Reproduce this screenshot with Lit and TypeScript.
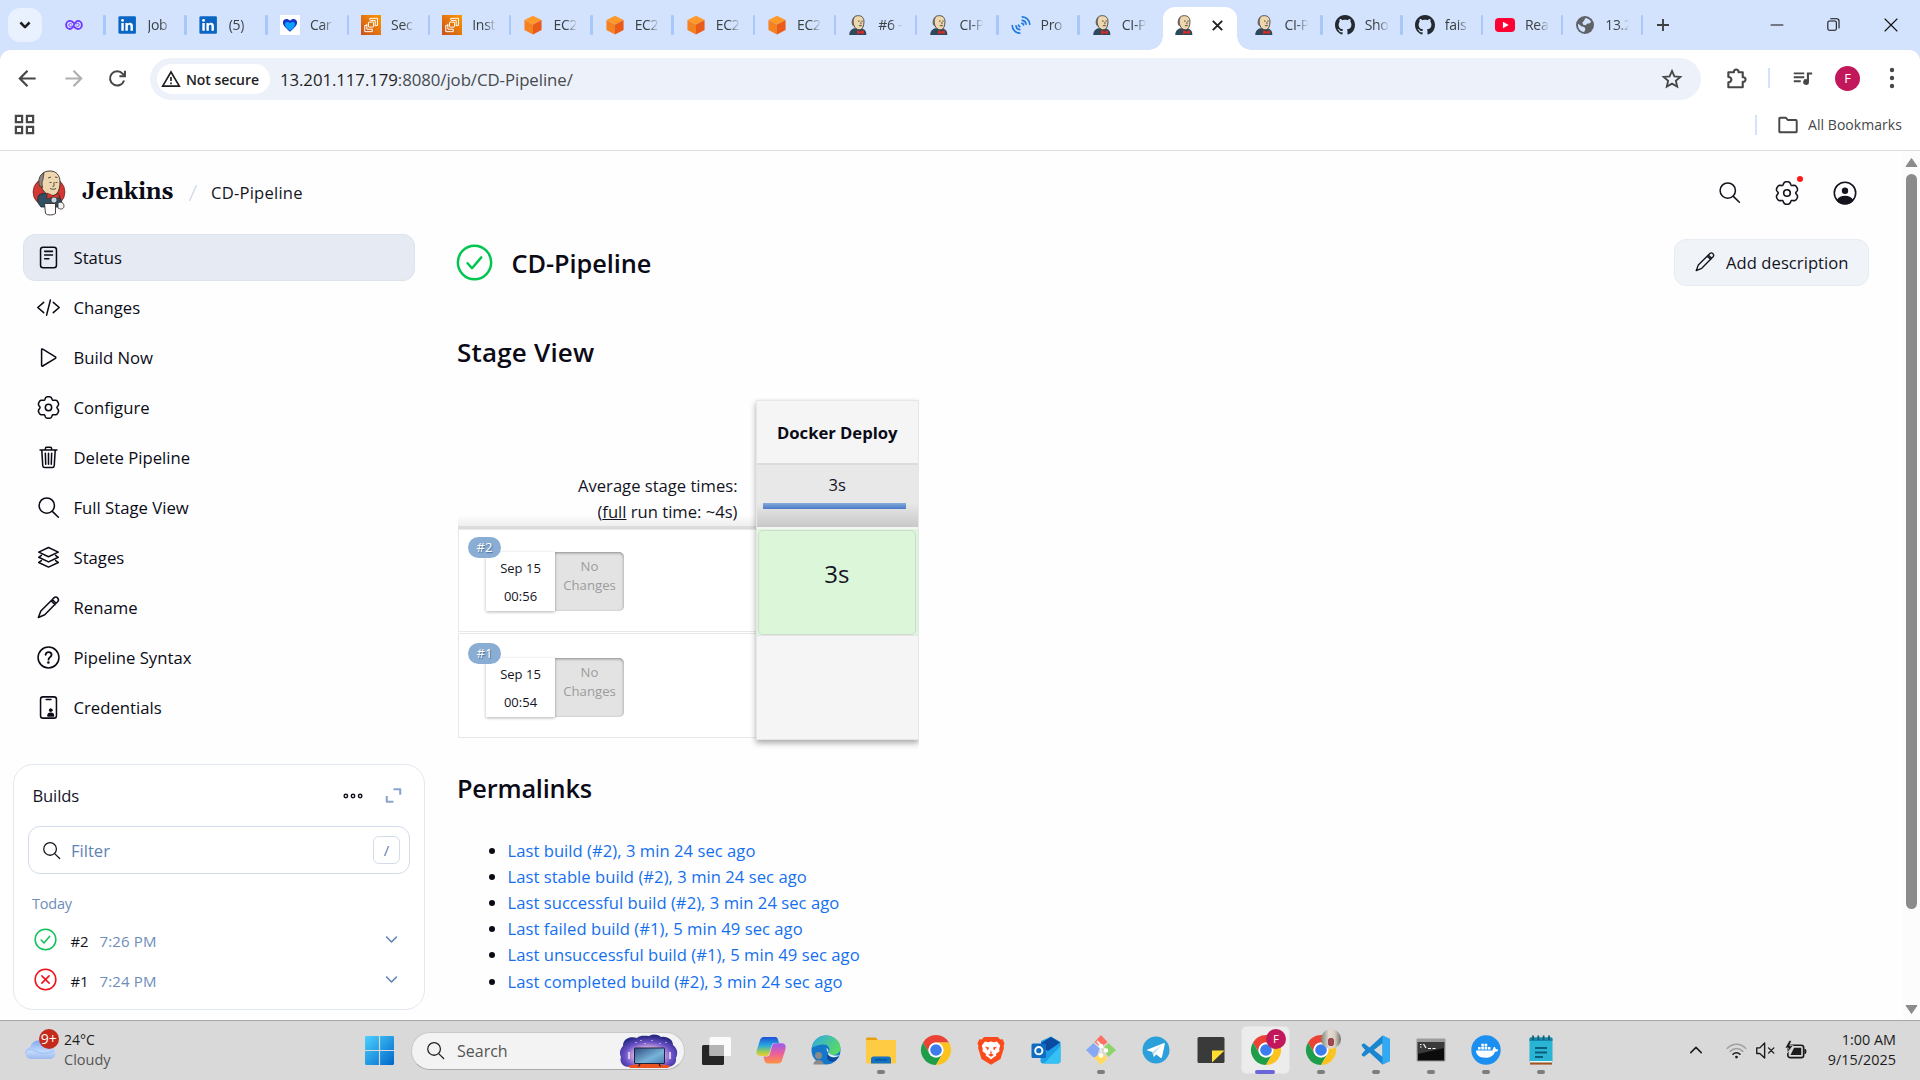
import { LitElement, html, css, svg, nothing } from "lit";
import { customElement, property } from "lit/decorators.js";
import { classMap } from "lit/directives/class-map.js";

const chromeMark = svg`
  <path d="M24 12H44.8A24 24 0 0 0 3.2 12L13.6 30A12 12 0 0 1 24 12Z" fill="#ea4335"/>
  <path d="M34.4 30L24 48A24 24 0 0 1 3.2 12L13.6 30A12 12 0 0 0 34.4 30Z" fill="#1e9e4a"/>
  <path d="M24 12H44.8A24 24 0 0 1 24 48L34.4 30A12 12 0 0 0 24 12Z" fill="#fcc31e"/>
  <circle cx="24" cy="24" r="12" fill="#fff"/><circle cx="24" cy="24" r="9.3" fill="#3b7ded"/>`;

/** Six-lobed cog outline, centred on 12,12: flat lobe tips joined by narrow rounded notches. */
const cog = (() => {
  const pts: string[] = [];
  for (let a = 0; a < 360; a += 3) {
    const t = (a * Math.PI) / 180;
    const c = 0.5 + 0.5 * Math.cos(6 * t);
    const r = 8.8 + 2.5 * (1 - Math.pow(1 - c, 2.2));
    pts.push(`${(12 + r * Math.sin(t)).toFixed(2)} ${(12 - r * Math.cos(t)).toFixed(2)}`);
  }
  return `M${pts.join("L")}Z`;
})();

type Glyph = { box: string; art: unknown };

const line = (art: unknown, box = "0 0 24 24"): Glyph => ({
  box,
  art: svg`<g fill="none" stroke="currentColor" stroke-width="1.6" stroke-linecap="round" stroke-linejoin="round">${art}</g>`,
});
const fill = (art: unknown, box = "0 0 24 24"): Glyph => ({ box, art });

const G: Record<string, Glyph> = {
  // sidebar
  status: line(svg`<rect x="3.7" y="1.2" width="16.6" height="21.6" rx="2.6"/><path d="M8 5.6h8.2M8 9.4h8.2M8 13.2h4.4"/>`),
  changes: line(svg`<path d="M7 6.600.8 12 7 17.400M17 6.600 23.200 12 17 17.400M14 4.200 10 20"/>`),
  play: line(svg`<path d="M4.800 3.900v16.300c0 .7.600 1.100 1.200.7l13.200-8c.6-.4.6-1.200 0-1.600L6 3.200c-.6-.4-1.200 0-1.200.7z"/>`),
  gear: line(svg`<path d=${cog}/><circle cx="12" cy="12" r="3.300"/>`),
  trash: line(svg`<path d="M5 4.200L6 20.600C6.100 21.700 6.900 22.500 8 22.500H16C17.100 22.500 17.900 21.700 18 20.600L19 4.200M3.200 4.200H20.800M8.800 4V2.300C8.800 1.700 9.200 1.200 9.900 1.200H14.100C14.800 1.200 15.200 1.700 15.200 2.300V4M12 7.600V19M8.700 7.600L9.100 19M15.300 7.600L14.900 19"/>`),
  search: line(svg`<circle cx="10.200" cy="10" r="8"/><path d="M16 16l6.300 6.200"/>`),
  layers: line(svg`<path d="M12 1.600 22.200 6.400 12 11.200 1.800 6.400zM4.600 9.800 1.800 11.800 12 16.600l10.200-4.800-2.800-2M4.600 15.200 1.800 17.200 12 22l10.200-4.800-2.800-2"/>`),
  pencil: line(svg`<path d="M16 3.600l1.600-1.600c1.200-1.200 3-.9 3.900 0 .9 1 1.200 2.800 0 4l-1.600 1.500zM16 3.600 4 15.600 1.400 22.400 8.100 19.600 19.900 7.500M15 5.200l3.800 3.800"/>`),
  help: line(svg`<circle cx="12" cy="12" r="10.900"/><path d="M9 9.200c.1-1.900 1.500-2.900 3.200-2.900 1.800 0 3 1.200 3 2.700 0 2.700-3.200 2.500-3.200 5.300" stroke-width="1.900"/><circle cx="11.900" cy="17.200" r=".6" fill="currentColor"/>`),
  cred: line(svg`<rect x="3.700" y=".9" width="16.600" height="22.200" rx="2.600"/><path d="M9.600 3.600h5"/><circle cx="14.300" cy="14.800" r="1.500" fill="currentColor" stroke-width="1"/><path d="M11.400 20.800c0-3.700 5.800-3.700 5.800 0z" fill="currentColor"/>`),
  user: line(svg`<circle cx="12" cy="12" r="10.700"/><circle cx="12" cy="9.800" r="3.200" fill="currentColor" stroke="none"/><path d="M4.600 19.200c3-5 11.800-5 14.800 0-3.500 4.600-11.300 4.600-14.800 0z" fill="currentColor"/>`),
  ok: line(svg`<circle cx="12" cy="12" r="10.800"/><path d="M7.500 12.500l2.900 3.200 6-7"/>`),
  fail: line(svg`<circle cx="12" cy="12" r="10.800"/><path d="M8.200 8.200l7.600 7.600M15.800 8.200l-7.600 7.600"/>`),
  more: line(svg`<circle cx="4.200" cy="12" r="1.900"/><circle cx="12" cy="12" r="1.900"/><circle cx="19.800" cy="12" r="1.900"/>`),
  expand: line(svg`<path d="M12 4h8.500v7M3.500 12.500V20H12" stroke-width="2.600" stroke-linecap="butt"/>`),
  chev: line(svg`<path d="M5 8.500l7 7 7-7" stroke-width="2.200"/>`),
  chevUp: line(svg`<path d="M5 15.500l7-7 7 7" stroke-width="2"/>`),
  // browser
  tabdown: line(svg`<path d="M6.500 9l5.500 5.600L17.500 9" stroke-width="3" stroke-linecap="butt"/>`),
  plus: line(svg`<path d="M12 3v18M3 12h18" stroke-width="2.800" stroke-linecap="butt"/>`),
  close: line(svg`<path d="M4.500 4.500l15 15M19.500 4.500l-15 15" stroke-width="3" stroke-linecap="butt"/>`),
  winmin: line(svg`<path d="M4 12h16" stroke-width="1.400"/>`),
  winmax: line(svg`<rect x="4" y="7" width="12" height="13" rx="2" stroke-width="1.500"/><path d="M8 4h8.500c2 0 3.300 1.300 3.300 3.300V17" stroke-width="1.500"/>`),
  winclose: line(svg`<path d="M4 4l16 16M20 4l-16 16" stroke-width="1.500"/>`),
  back: line(svg`<path d="M20.500 12H4M12 4l-8 8 8 8" stroke-width="2.300" stroke-linecap="butt" stroke-linejoin="miter"/>`),
  fwd: line(svg`<path d="M3.500 12H20M12 4l8 8-8 8" stroke-width="2.300" stroke-linecap="butt" stroke-linejoin="miter"/>`),
  reload: line(svg`<path d="M19.500 14.200A8.200 8.200 0 1 1 18 6.600l2 2.400M20.500 3v6.300h-6.300" stroke-width="2.300" stroke-linecap="butt" stroke-linejoin="miter"/>`),
  warn: line(svg`<path d="M12 3.600 22 20.500H2z" stroke-width="2" stroke-linejoin="miter"/><path d="M12 9.500v5M12 16.200v2" stroke-width="2" stroke-linecap="butt"/>`),
  star: line(svg`<path d="M12 3.200l2.600 5.900 6.500.6-4.900 4.300 1.500 6.300L12 17l-5.700 3.300 1.500-6.300-4.900-4.300 6.500-.6z" stroke-width="2" stroke-linejoin="miter"/>`),
  puzzle: line(svg`<path d="M3.500 5.500h5.800c-.6-3.800 5.400-3.800 4.800 0h4.400v5.200c3.900-.5 3.900 5.300 0 4.800v5.700h-15v-5.300c4.200.2 4.200-5.700 0-5.500z" stroke-width="2.200"/>`),
  music: fill(svg`<path d="M2 5h12v2.200H2zM2 9.500h12v2.200H2zM2 14h8v2.200H2zM17 5h6v2.300h-3.600V16a3.300 3.300 0 1 1-2.400-3.200z" fill="currentColor"/>`),
  dots: fill(svg`<circle cx="12" cy="4" r="2.200" fill="currentColor"/><circle cx="12" cy="12" r="2.200" fill="currentColor"/><circle cx="12" cy="20" r="2.200" fill="currentColor"/>`),
  apps: line(svg`<path d="M3 3h6.500v6.500H3zM14.500 3H21v6.500h-6.500zM3 14.500h6.500V21H3zM14.500 14.500H21V21h-6.500z" stroke-width="2.300" stroke-linejoin="miter"/>`),
  folderLine: line(svg`<path d="M2.500 19V5c0-.6.400-1 1-1h6l2.500 2.600h8.500c.6 0 1 .4 1 1V19c0 .6-.4 1-1 1h-17c-.6 0-1-.4-1-1z" stroke-width="2.100"/>`),
  // favicons
  loop: line(svg`<path d="M12 9.600C10.300 7.500 8.800 6.500 6.900 6.500a5.300 5.300 0 0 0 0 10.800c4.700 0 5.500-10.800 10.200-10.800a5.300 5.300 0 0 1 0 10.800c-1.900 0-3.400-1-5.100-3.100" stroke="#7038ff" stroke-width="2.500"/><path d="M9 13.500a2.200 2.200 0 1 1-.2-3M15 10.400a2.200 2.200 0 1 1 .2 3" stroke="#7038ff" stroke-width="1.200"/>`),
  linkedin: fill(svg`<rect x=".5" y="1.500" width="21" height="21" rx="1.500" fill="#0a66c2"/><path d="M4 9.500h2.900v9.300H4zM8.900 9.500h2.800v1.300c1.500-2.500 6.200-2.200 6.200 2.500v5.500H15v-5c0-3-3.200-2.700-3.200 0v5H8.900z" fill="#fff"/><circle cx="5.450" cy="6.500" r="1.700" fill="#fff"/>`),
  heart: fill(svg`<rect width="24" height="24" fill="#fff"/><path d="M12 20C6 15 3.500 12 3.500 9c0-5 6-5.500 8.500-2 2.500-3.500 8.500-3 8.500 2 0 3-2.500 6-8.500 11z" fill="#1a35c8"/><path d="M12 19c-4-3.500-6-5.500-6-8 0-3 4-3.500 6-1 2-2.500 6-2 6 1 0 2.500-2 4.500-6 8z" fill="#0aa0ff"/>`),
  aws: fill(svg`<defs><linearGradient id="aw" x1="0" y1="1" x2="1" y2="0"><stop offset="0" stop-color="#c8511b"/><stop offset="1" stop-color="#f90"/></linearGradient></defs><rect width="24" height="24" fill="url(#aw)"/><g fill="none" stroke="#fff" stroke-width="1.200"><rect x="9" y="8.500" width="6" height="6" rx=".5"/><path d="M7.500 12.500H4.500v7.500h9v-3M10.500 6V4h9.300v8.500h-2.500M7 10.500V17h6.500M11 6.500h6v7"/></g>`),
  ec2: fill(svg`<path d="M12 .8 22.300 6 12 11.500 1.700 6z" fill="#ff9a2a"/><path d="M1.700 6 12 11.500V23.500L1.700 18z" fill="#f58220"/><path d="M22.300 6 12 11.500v12L22.300 18z" fill="#ea5b1b"/>`),
  jenkins: fill(svg`<path d="M1.500 24c0-5 3-7 6-8h8c4 1 6.500 2.500 6.500 8z" fill="#2c4a5c"/><path d="M6 8C5.500 2.500 8.500.8 12.500.8c4.500 0 7 3 6.600 8-.2 3-.6 6-3 8.200-2 1.300-4 1-6.100-.5C7.500 14.500 6.500 11.500 6 8z" fill="#eed7ae" stroke="#3a3330" stroke-width="1"/><path d="M8.500 2.500C4.500 4 3.700 8 5 12l2.500 2c-.8-3-1.500-5-.7-7.500C7.300 4.800 7.800 3.700 8.500 2.500z" fill="#6b6560"/><path d="M12 7.300h2M16 7.300h1.800M13 12.800h3.500M15.500 8.500v2.600" stroke="#3a3330" stroke-width="1" fill="none"/><path d="M11 18l4 2 4-2v5l-4-1.500-4 1.500z" fill="#e02a24"/>`),
  waves: line(svg`<g stroke="#1f7ae0" stroke-width="2"><path d="M13.500 6.500a5 5 0 0 1 4.500 4.500M13.500 2.200a9.300 9.300 0 0 1 9 9M10.500 17.500A5 5 0 0 1 6 13M10.500 21.800a9.300 9.300 0 0 1-9-9M10.500 14a2 2 0 0 1-1.500-2M13 10a2 2 0 0 1 2 2"/></g>`),
  github: fill(svg`<path fill="#24292f" transform="scale(1.5)" d="M8 0C3.580 0 0 3.580 0 8c0 3.540 2.290 6.530 5.470 7.590.4.070.55-.17.55-.38 0-.19-.010-.82-.010-1.490-2.010.37-2.530-.49-2.690-.94-.090-.23-.48-.94-.82-1.130-.28-.15-.68-.52-.010-.53.630-.010 1.080.58 1.230.82.720 1.210 1.870.87 2.330.66.070-.52.280-.87.510-1.070-1.780-.2-3.640-.89-3.640-3.950 0-.87.310-1.590.820-2.150-.080-.2-.36-1.020.080-2.120 0 0 .67-.21 2.200.82.640-.18 1.320-.27 2-.27s1.360.090 2 .27c1.530-1.040 2.200-.82 2.200-.82.440 1.100.160 1.920.080 2.120.510.560.820 1.270.820 2.150 0 3.070-1.870 3.750-3.650 3.950.290.250.540.730.540 1.480 0 1.070-.010 1.930-.010 2.200 0 .210.150.460.550.380A8.010 8.010 0 0 0 16 8c0-4.420-3.580-8-8-8z"/>`),
  youtube: fill(svg`<rect y="3.500" width="24" height="17" rx="4.500" fill="#f03"/><path d="M9.500 8v8l7-4z" fill="#fff"/>`),
  globe: fill(svg`<circle cx="12" cy="12" r="10.800" fill="#5f6368"/><path d="M12.500 3.500c3 .3 5.500 2 6.800 4.500l-1.500 2-3.500.4-1.300 2-3.200-.7-1-2.500 2.200-2.500zM3.600 10.500l4.600 3.300 3 .7 1.300 2.500-1.500 3.300C6.500 20 3 16 3.600 10.500z" fill="#d3e3fd"/>`),
  // taskbar
  start: fill(svg`<defs><linearGradient id="wi" gradientUnits="userSpaceOnUse" x1="0" y1="0" x2="30" y2="30"><stop offset="0" stop-color="#4cd0ff"/><stop offset="1" stop-color="#0067c8"/></linearGradient></defs><path d="M0 1.200C0 .5.500 0 1.200 0H14.400V14.400H0zM15.600 0h13.200c.7 0 1.200.5 1.200 1.200v13.200H15.600zM0 15.600h14.400V30H1.200C.5 30 0 29.500 0 28.800zM15.600 15.600H30v13.200c0 .7-.5 1.200-1.200 1.200H15.600z" fill="url(#wi)"/>`, "0 0 30 30"),
  taskview: fill(svg`<rect x="1" y="10" width="22" height="20" rx="1.500" fill="#262626"/><rect x="8.500" y="2" width="21.500" height="19" rx="1.500" fill="#fff" opacity=".88"/><path d="M8.500 10H23v11H8.500z" fill="#b4b4b4"/>`, "0 0 30 30"),
  copilot: fill(svg`<defs><linearGradient id="c1" x1="0" y1="0" x2="0" y2="1"><stop offset="0" stop-color="#1c4fd8"/><stop offset=".45" stop-color="#2aa9e0"/><stop offset=".8" stop-color="#a8d04a"/><stop offset="1" stop-color="#f0c83c"/></linearGradient><linearGradient id="c2" x1="0" y1="0" x2="0" y2="1"><stop offset="0" stop-color="#9a5cf0"/><stop offset=".5" stop-color="#ea5f9c"/><stop offset="1" stop-color="#ff9340"/></linearGradient></defs><path d="M8 2h11c2 0 2.600 1 3.200 3l.8 3h-4c-2 0-3 1-3.500 3l-2 7c-.6 2-1.500 3-3.500 3H4C.8 21 0 18 .8 15L4 5c.7-2 2-3 4-3z" fill="url(#c1)"/><path d="M22 28.500H12c-2 0-3-1-3.600-3L7.500 21.500h3c2 0 3-.8 3.500-2.800l2-7.500c.6-2 1.500-3 3.500-3H26c3.400 0 4.200 3 3.400 6L26 25.500c-.7 2-2 3-4 3z" fill="url(#c2)"/>`, "0 0 30 30"),
  edge: fill(svg`<defs><linearGradient id="e1" x1="0" y1="0" x2="1" y2=".5"><stop offset="0" stop-color="#2ea8e8"/><stop offset="1" stop-color="#58d86a"/></linearGradient></defs><circle cx="15" cy="15" r="14.500" fill="#1477c9"/><path d="M.8 13C2 5 8 .5 15 .5c8 0 14.500 5.500 14.500 12.500 0 4-3.200 7-7 7-4 0-5.500-1.500-4.500-3.500C19.500 13 17 9.500 12.500 9.500 7 9.500 2 12 .8 13z" fill="url(#e1)"/><path d="M28 21.500c-4 2-9.500 1.500-11-2.500-3 5 1.500 9 7 7z" fill="#0d4a9a"/><path d="M29 20c-5 4-11 2-12-1 1-2 .5-5-1.500-6 0 6 7 9 13.500 7z" fill="#e8f2f8"/><circle cx="7.500" cy="20.500" r="3.500" fill="#8a8a8a"/><path d="M2.500 29.500c0-6 10-6 10 0z" fill="#8a8a8a"/>`, "0 0 30 30"),
  explorer: fill(svg`<path d="M0 4c0-1 .6-1.600 1.600-1.600H9c.7 0 1 .2 1.400.7L12.500 6H0z" fill="#e8a10c"/><rect y="5" width="30" height="23.500" rx="1.200" fill="#ffcb43"/><path d="M5 28.500V24c0-1.600 1-2.600 2.600-2.600h14.800c1.600 0 2.600 1 2.600 2.600v4.500z" fill="#1272c4"/><path d="M9 24.800h12" stroke="#0c4c8c" stroke-width="1.200"/>`, "0 0 30 30"),
  chrome: fill(chromeMark, "0 0 48 48"),
  brave: fill(svg`<path d="M8 2h14l2.200 2.500 2.500-.3 1.800 4.300-1 2.700.5 1.500L24.500 24 15 29.800 5.500 24 2 12.700l.5-1.500-1-2.700 1.800-4.300 2.500.3z" fill="#fb4a1c"/><path d="M15 6.500l3 .8 3-.8 3.200 4-1 3.500.3 2.200-3.600 2.800.4 1.800-2.600 1.400L15 24.500l-2.700-2.300-2.600-1.400.4-1.800-3.600-2.800.3-2.200-1-3.500 3.200-4 3 .8z" fill="#fff"/><path d="M9 11.500l4 1-1 3zM21 11.500l-4 1 1 3zM15 15l1 3.500h-2zM12 19.800l3-1 3 1-3 2z" fill="#fb4a1c"/>`, "0 0 30 30"),
  outlook: fill(svg`<path d="M10 6 20 1.500 29.500 7v19c0 1.500-1 2.500-2.500 2.500H12c-1.500 0-2.500-1-2.500-2.500z" fill="#1e9fe8"/><path d="M10 8l10-6 9 5.500-12 8.500-7-4z" fill="#0b4a9e"/><path d="M29.500 11v15c0 1.500-1 2.500-2.500 2.500H13z" fill="#35c1f4"/><rect x=".5" y="8.500" width="14.500" height="14.500" rx="1.500" fill="#0f6cc4"/><circle cx="7.800" cy="15.700" r="3.600" fill="none" stroke="#fff" stroke-width="2"/>`, "0 0 30 30"),
  git: fill(svg`<path d="M15 0l6.500 7-6.500 5.500L8.500 7z" fill="#ff6f62"/><path d="M0 15l7.500-7 6 5.500-3 9L7 22z" fill="#88a8f5"/><path d="M30 15l-7.500-7-6 5.500 6 8.500z" fill="#8fd46a"/><path d="M15 30l-7-7 7-5.500 7 5.500z" fill="#ffdb66"/><g stroke="#e8e8e8" stroke-width="2" fill="none"><path d="M11 6l4 4.500v9M15 10.500l5 5"/></g><circle cx="15" cy="20.500" r="2.300" fill="#fff"/><circle cx="15" cy="11" r="2.300" fill="#fff"/><circle cx="20" cy="15.500" r="2.300" fill="#fff"/>`, "0 0 30 30"),
  telegram: fill(svg`<circle cx="15" cy="15" r="13.500" fill="#2ba0da"/><path d="M6 14.700 22.500 8.200c.8-.3 1.400.2 1.200 1.200L21 22c-.2.900-.8 1.100-1.500.7l-4.200-3.100-2 2c-.3.300-.6.300-.7-.2l-1.300-4.300-4.800-1.500c-.7-.3-.7-.7-.5-.9z" fill="#fff"/><path d="M11.300 17.100 20 11l-6.800 7.500-.3 3z" fill="#b9dcf0"/>`, "0 0 30 30"),
  sticky: fill(svg`<rect x="1.500" y="2" width="27" height="26" rx="1.500" fill="#3a3a3a"/><path d="M16 15.500h12.500L16 27.500z" fill="#ffdd33"/>`, "0 0 30 30"),
  vscode: fill(svg`<path d="M21.500.5 29 4v22l-7.500 3.500L8.500 17.600 3 21.800.8 20.600V19l3.400-4L.8 11V9.400L3 8.200l5.500 4.200zM21.500 8.300 13 15l8.500 6.700z" fill="#1b86d0" fill-rule="evenodd"/><path d="M21.500.5 29 4v22l-7.500 3.500z" fill="#32a9f3"/>`, "0 0 30 30"),
  term: fill(svg`<rect x=".5" y="3.500" width="29" height="23" rx="1" fill="#9c9c9c"/><rect x="1.800" y="7" width="26.400" height="18.500" fill="#0c0c0c"/><path d="M1.800 7h26.400v6L1.800 19z" fill="#3a3a3a"/><path d="M4 9.500h1.500M4 12h1.500M7.500 9l2.500 4M12 13.500h3M16.500 13.500h3" stroke="#fff" stroke-width="1.200"/>`, "0 0 30 30"),
  docker: fill(svg`<circle cx="15" cy="15" r="14.700" fill="#1d8ff0"/><path d="M5 15.500h16.500c.2-1.700.8-2.800 1.800-3.800 1 .7 1.500 1.600 1.500 2.600 1-.2 2 0 2.600.4-.6 1.500-1.900 2-3.400 2-1.500 4-4.800 6-9.500 6-6 0-9.500-2.500-9.500-7.200z" fill="#fff"/><path d="M7 12h2.600v2.600H7zM10.300 12h2.600v2.600h-2.600zM13.600 12h2.600v2.600h-2.600zM16.900 12h2.600v2.600h-2.600zM10.300 8.800h2.600v2.600h-2.600zM13.600 8.800h2.600v2.600h-2.600z" fill="#fff"/>`, "0 0 30 30"),
  notepad: fill(svg`<rect x="3.500" y="2.500" width="23" height="25" rx="1.500" fill="#2ab4d4"/><path d="M3.500 4c0-1 .5-1.500 1.500-1.500h20c1 0 1.500.5 1.500 1.500v2h-23z" fill="#1686a8"/><path d="M9 13h12M9 17.500h12M9 22h8" stroke="#0d5c7c" stroke-width="1.800"/><path d="M7 .5v4.500M12.300.5v4.500M17.600.5v4.500M23 .5v4.500" stroke="#175c72" stroke-width="1.800"/><path d="M4 28.500h22" stroke="#a5531a" stroke-width="2.200"/><path d="M4 26.700h22" stroke="#fff" stroke-width="1.200"/>`, "0 0 30 30"),
  wifi: line(svg`<path d="M1.500 9.500c6-6.300 15-6.300 21 0" stroke="#a0a0a0" stroke-width="1.800"/><path d="M4.800 13c4.200-4.400 10.200-4.400 14.400 0" stroke="#a0a0a0" stroke-width="1.800"/><path d="M8 16.300c2.300-2.400 5.700-2.400 8 0" stroke-width="1.800"/><circle cx="12" cy="19.500" r="1.600" fill="currentColor" stroke="none"/>`),
  mute: line(svg`<path d="M2 9v6.500h3.500L11 20.500v-17L5.500 9zM15.500 9l6 6M21.500 9l-6 6" stroke-width="1.600"/>`),
  battery: fill(svg`<rect x="4" y="6.500" width="16.500" height="13" rx="2.500" fill="none" stroke="currentColor" stroke-width="1.700"/><path d="M21.800 10.500c1.500 0 1.500 5 0 5z" fill="currentColor" stroke="currentColor"/><path d="M10.500 9.200H18v7.600H6.800z" fill="currentColor"/><path d="M5.500 1.500 1 9.500h3.500L3 15l6.500-8H6l2-5.500z" fill="currentColor" stroke="#dadada" stroke-width=".8"/>`),
};

/** Square inline icon drawn from the glyph table. */
@customElement("ui-icon")
export class UiIcon extends LitElement {
  @property() name = "";
  @property({ type: Number }) size = 24;
  static styles = css`
    :host { display: inline-flex; flex: none; }
    svg { display: block; overflow: visible; }
  `;
  render() {
    const g = G[this.name];
    if (!g) return nothing;
    return html`<svg width=${this.size} height=${this.size} viewBox=${g.box} aria-hidden="true">${g.art}</svg>`;
  }
}

type Tab = { icon: string; text: string; state?: "active" | "after" };
const TABS: Tab[] = [
  { icon: "linkedin", text: "Job" },
  { icon: "linkedin", text: "(5)" },
  { icon: "heart", text: "Car" },
  { icon: "aws", text: "Sec" },
  { icon: "aws", text: "Inst" },
  { icon: "ec2", text: "EC2" },
  { icon: "ec2", text: "EC2" },
  { icon: "ec2", text: "EC2" },
  { icon: "ec2", text: "EC2" },
  { icon: "jenkins", text: "#6 -" },
  { icon: "jenkins", text: "CI-P" },
  { icon: "waves", text: "Pro" },
  { icon: "jenkins", text: "CI-P" },
  { icon: "jenkins", text: "", state: "active" },
  { icon: "jenkins", text: "CI-P", state: "after" },
  { icon: "github", text: "Sho" },
  { icon: "github", text: "fais" },
  { icon: "youtube", text: "Rea" },
  { icon: "globe", text: "13.2" },
];

@customElement("browser-chrome")
export class BrowserChrome extends LitElement {
  static styles = css`
    :host { display: block; height: 151px; box-sizing: border-box; background: #fff; border-bottom: 1px solid #dfdfe1; color: #3c4043; }
    .strip { display: flex; align-items: center; height: 50px; background: #d3e3fd; }
    .search { display: flex; align-items: center; justify-content: center; width: 34px; height: 34px; margin-left: 8px; border-radius: 12px; background: #e9f1fe; color: #1f1f1f; }
    .pinned { width: 62px; display: flex; justify-content: center; }
    .pinned ui-icon { position: relative; left: 1px; }
    .tab { display: flex; align-items: center; width: 81.200px; height: 50px; flex: none; }
    .tab.late { width: 80.200px; }
    .rule { width: 2.500px; height: 20px; border-radius: 1px; background: #a8c7fa; margin: 0 12px 0 -1px; flex: none; }
    .after .rule { background: none; }
    .label { margin-left: 10px; width: 32px; white-space: nowrap; font-size: 14px; letter-spacing: -0.3px; line-height: 24px; -webkit-mask-image: linear-gradient(90deg, #000 40%, transparent 76%); mask-image: linear-gradient(90deg, #000 40%, transparent 76%); }
    .tab.active { width: 74px; height: 43px; align-self: flex-end; margin: 0 3.500px 0 4px; background: #fff; border-radius: 12px 12px 0 0; position: relative; padding: 0 0 7px 11px; gap: 15.500px; box-sizing: border-box; color: #1f1f1f; }
    .tab.active::before, .tab.active::after { content: ""; position: absolute; bottom: 0; width: 14px; height: 14px; }
    .tab.active::before { left: -14px; background: radial-gradient(circle at 0 0, transparent 13.500px, #fff 14px); }
    .tab.active::after { right: -14px; background: radial-gradient(circle at 100% 0, transparent 13.500px, #fff 14px); }
    .plus { display: flex; align-items: center; }
    .wins { display: flex; margin-left: auto; margin-right: 1px; color: #111; }
    .wins span { width: 57px; display: flex; justify-content: center; }
    .bar { display: flex; align-items: center; height: 56px; background: #fff; border-radius: 11px 11px 0 0; box-sizing: border-box; padding: 0 16px; }
    .barwrap { background: #d3e3fd; }
    .nav { display: flex; align-items: center; gap: 22.500px; color: #474747; width: 134px; }
    .off { color: #b0b0b0; }
    .omni { display: flex; align-items: center; width: 1552px; height: 42px; border-radius: 21px; background: #ecf1fa; box-sizing: border-box; padding: 0 18px 0 7px; margin-top: 2px; }
    .chip { display: flex; align-items: center; gap: 5px; height: 30px; width: 113px; border-radius: 15px; background: #fff; box-sizing: border-box; padding-left: 4px; color: #1f1f1f; font-size: 14px; font-weight: 600; letter-spacing: -0.05px; white-space: nowrap; }
    .url { margin-left: 10px; font-size: 16.800px; letter-spacing: -0.06px; color: #474a4e; white-space: nowrap; }
    .url b { color: #1f1f1f; font-weight: 400; }
    .star { margin-left: auto; color: #474747; }
    .tools { display: flex; align-items: center; color: #474747; margin-left: 24px; }
    .sep { width: 2px; height: 20px; background: #d3e3fd; }
    .tools .sep { margin: 0 22px 0 20px; }
    .face { width: 25px; height: 25px; border-radius: 50%; background: #c2185b; color: #fff; display: flex; align-items: center; justify-content: center; font-size: 13px; margin: 0 20px 0 22px; }
    .marks { display: flex; align-items: center; height: 44px; padding: 0 18px 7px 13px; box-sizing: border-box; color: #474747; font-size: 14px; letter-spacing: 0.05px; }
    .marks .sep { margin-left: auto; margin-right: 20px; }
    .marks span { margin-left: 9px; }
  `;
  render() {
    return html`
      <div class="strip">
        <div class="search"><ui-icon name="tabdown" size="20"></ui-icon></div>
        <div class="pinned"><ui-icon name="loop" size="18"></ui-icon></div>
        ${TABS.map((t, i) =>
          t.state === "active"
            ? html`<div class="tab active"><ui-icon name=${t.icon} size="20"></ui-icon><ui-icon name="close" size="15"></ui-icon></div>`
            : html`<div class=${classMap({ tab: true, after: t.state === "after", late: i > 13 })}>
                <i class="rule"></i><ui-icon name=${t.icon} size="20"></ui-icon><span class="label">${t.text}</span>
              </div>`
        )}
        <i class="rule"></i>
        <div class="plus"><ui-icon name="plus" size="16"></ui-icon></div>
        <div class="wins">
          <span><ui-icon name="winmin" size="18"></ui-icon></span>
          <span><ui-icon name="winmax" size="17"></ui-icon></span>
          <span><ui-icon name="winclose" size="18"></ui-icon></span>
        </div>
      </div>
      <div class="barwrap">
        <div class="bar">
          <div class="nav">
            <ui-icon name="back" size="23"></ui-icon><ui-icon class="off" name="fwd" size="23"></ui-icon><ui-icon name="reload" size="21"></ui-icon>
          </div>
          <div class="omni">
            <div class="chip"><ui-icon name="warn" size="20"></ui-icon>Not secure</div>
            <div class="url"><b>13.201.117.179</b>:8080/job/CD-Pipeline/</div>
            <ui-icon class="star" name="star" size="22"></ui-icon>
          </div>
          <div class="tools">
            <ui-icon name="puzzle" size="23"></ui-icon>
            <i class="sep"></i>
            <ui-icon name="music" size="21"></ui-icon>
            <div class="face">F</div>
            <ui-icon name="dots" size="24"></ui-icon>
          </div>
        </div>
      </div>
      <div class="marks">
        <ui-icon name="apps" size="23"></ui-icon>
        <i class="sep"></i><ui-icon name="folderLine" size="22"></ui-icon><span>All Bookmarks</span>
      </div>
    `;
  }
}

const MENU: [string, string][] = [
  ["status", "Status"],
  ["changes", "Changes"],
  ["play", "Build Now"],
  ["gear", "Configure"],
  ["trash", "Delete Pipeline"],
  ["search", "Full Stage View"],
  ["layers", "Stages"],
  ["pencil", "Rename"],
  ["help", "Pipeline Syntax"],
  ["cred", "Credentials"],
];

@customElement("side-panel")
export class SidePanel extends LitElement {
  static styles = css`
    :host { display: block; width: 438px; flex: none; color: #14141f; }
    .menu { display: flex; flex-direction: column; gap: 3px; padding-left: 23px; width: 392px; }
    .item { display: flex; align-items: center; gap: 13.500px; height: 47px; box-sizing: border-box; padding: 0 0 1px 13px; border: 1px solid transparent; border-radius: 12px; font-size: 16.700px; letter-spacing: 0; color: #0b0b17; }
    .item.on { background: #e6ebf3; border-color: #dce3ee; }
    .card { margin: 33px 0 0 13px; width: 412px; height: 246px; box-sizing: border-box; border: 1px solid #e2e8f2; border-radius: 20px; padding: 0 14px; background: #fff; }
    .head { display: flex; align-items: center; height: 61px; padding: 0 7.500px 0 4.500px; font-size: 16.600px; letter-spacing: -0.15px; }
    .head .more { margin-left: auto; margin-right: 20px; }
    .blue { color: #8aa4cb; }
    .filter { display: flex; align-items: center; height: 48px; box-sizing: border-box; border: 1px solid #d3dceb; border-radius: 12px; padding: 0 9px 0 13px; font-size: 16.600px; color: #6182b4; }
    .filter ui-icon { color: #14141f; margin-right: 10px; }
    .kbd { margin-left: auto; width: 27px; height: 28px; box-sizing: border-box; border: 1px solid #d3dceb; border-radius: 6px; display: flex; align-items: center; justify-content: center; font-size: 15px; }
    .today { color: #6d8dbb; font-size: 14.500px; line-height: 20px; margin: 20px 0 5px 4px; letter-spacing: -0.2px; }
    .run { display: flex; align-items: center; height: 40px; padding: 0 10px 0 6px; font-size: 15px; }
    .run b { font-weight: 400; margin: 4px 11px 0 13.500px; width: 18px; letter-spacing: -0.3px; }
    .run span { color: #6d8dbb; margin-top: 4px; letter-spacing: 0.15px; }
    .run .c { margin-left: auto; color: #6182b4; }
    .ok { color: #13c25b; }
    .bad { color: #f0131e; }
  `;
  render() {
    return html`
      <nav class="menu">
        ${MENU.map(([i, t], n) => html`<a class=${classMap({ item: true, on: n === 0 })}><ui-icon name=${i} size="23"></ui-icon>${t}</a>`)}
      </nav>
      <section class="card">
        <div class="head">Builds<ui-icon class="more" name="more" size="22"></ui-icon><ui-icon class="blue" name="expand" size="19"></ui-icon></div>
        <div class="filter"><ui-icon name="search" size="19"></ui-icon>Filter<span class="kbd">/</span></div>
        <div class="today">Today</div>
        <div class="run"><ui-icon class="ok" name="ok" size="23"></ui-icon><b>#2</b><span>7:26 PM</span><ui-icon class="c" name="chev" size="17"></ui-icon></div>
        <div class="run"><ui-icon class="bad" name="fail" size="23"></ui-icon><b>#1</b><span>7:24 PM</span><ui-icon class="c" name="chev" size="17"></ui-icon></div>
      </section>
    `;
  }
}

const LINKS = [
  "Last build (#2), 3 min 24 sec ago",
  "Last stable build (#2), 3 min 24 sec ago",
  "Last successful build (#2), 3 min 24 sec ago",
  "Last failed build (#1), 5 min 49 sec ago",
  "Last unsuccessful build (#1), 5 min 49 sec ago",
  "Last completed build (#2), 3 min 24 sec ago",
];

@customElement("job-page")
export class JobPage extends LitElement {
  static styles = css`
    :host { display: block; flex: none; width: 1431px; color: #14141f; font-size: 16.600px; }
    .title { display: flex; align-items: center; height: 47px; padding-top: 5px; }
    .title ui-icon.ok { color: #00c650; margin-left: 17.500px; }
    h1, h2 { margin: 0; font-weight: 600; font-size: 25.300px; line-height: 40px; color: #0b0b17; }
    h1 { margin: 1px 0 0 19px; letter-spacing: -0.05px; }
    h2 { margin-left: 19px; }
    .stage { margin-top: 46px; font-size: 26px; letter-spacing: 0.2px; }
    .btn { margin-left: auto; display: flex; align-items: center; gap: 11px; width: 195px; height: 47px; box-sizing: border-box; border: 1px solid #e7ecf3; border-radius: 12px; background: #f0f3f8; padding: 0 0 1px 20px; white-space: nowrap; letter-spacing: 0.05px; }
    .table { display: grid; grid-template-columns: 297.500px 163.500px; margin: 28px 0 0 20px; width: 461px; height: 340px; }
    .left { display: flex; flex-direction: column; }
    .avg { height: 126px; box-sizing: border-box; display: flex; flex-direction: column; justify-content: flex-end; text-align: right; padding: 0 18px 1px 0; line-height: 26px; background: linear-gradient(#fefefe 91%, #eeeeee); }
    .bar { height: 3px; background: #dcdcdc; flex: none; }
    .run { height: 103px; box-sizing: border-box; border: 1px solid #e8e8ea; border-right: 0; margin-bottom: 1px; background: #fff; position: relative; }
    .run + .run { height: 105px; padding-top: 2px; }
    .num { position: absolute; left: 9px; top: 7px; width: 33px; height: 21px; border-radius: 10.500px; background: #89add3; color: #fff; font-size: 13px; line-height: 21px; text-align: center; text-shadow: 1px 1px 1px #4a6f9a; }
    .run + .run .num { top: 9px; }
    .pair { display: flex; padding: 22px 0 0 27px; }
    .when { width: 69px; height: 59px; box-sizing: border-box; background: #fff; box-shadow: 0 1px 3px rgba(0, 0, 0, 0.3); font-size: 13px; letter-spacing: 0; text-align: center; line-height: 28px; padding-top: 2px; }
    .none { width: 69px; height: 59px; box-sizing: border-box; background: #e3e3e3; border-radius: 0 5px 5px 0; box-shadow: inset 0 1px 3px rgba(0, 0, 0, 0.4); color: #9c9c9c; font-size: 13.200px; line-height: 19px; text-align: center; padding-top: 5px; }
    .col { display: flex; flex-direction: column; background: #f5f5f5; box-shadow: 0 3px 6px rgba(0, 0, 0, 0.34); border: 1px solid #e6e6e6; box-sizing: border-box; clip-path: inset(-2px 0 -14px -6px); }
    .name { height: 62px; line-height: 63px; text-align: center; font-weight: 700; font-size: 16.700px; letter-spacing: -0.05px; color: #0b0b17; border-bottom: 2px solid #dcdcdc; }
    .mean { height: 62px; box-sizing: border-box; background: linear-gradient(#e8e8e8 62%, #c8c8c8); text-align: center; line-height: 26px; padding: 7px 12px 0 6px; }
    .mean span { display: block; padding-left: 6px; }
    .mean i { display: block; height: 6px; margin-top: 5px; background: linear-gradient(#85acd8, #4a78c9); }
    .cell { height: 107px; box-sizing: border-box; margin: 2px 0 0; background: #dcf6da; padding: 1px 2px 0 1px; border-bottom: 1px solid #e4e4e4; }
    .cell div { height: 105px; box-sizing: border-box; border: 1.500px solid #cddccd; border-radius: 5px; text-align: center; font-size: 24px; line-height: 85px; background: #dcf6da; }
    .links { margin-top: 28px; letter-spacing: -0.2px; }
    ul { margin: 29.500px 0 0 20px; padding-left: 49.500px; line-height: 26.200px; color: #0b0b17; }
    li a { color: #1570ef; }
    li { letter-spacing: 0.04px; }
  `;
  row(n: string, time: string) {
    return html`<div class="run">
      <div class="pair"><div class="when">Sep 15<br />${time}</div><div class="none">No<br />Changes</div></div>
      <span class="num">${n}</span>
    </div>`;
  }
  render() {
    return html`
      <div class="title">
        <ui-icon class="ok" name="ok" size="37"></ui-icon>
        <h1>CD-Pipeline</h1>
        <a class="btn"><ui-icon name="pencil" size="20"></ui-icon>Add description</a>
      </div>
      <h2 class="stage">Stage View</h2>
      <div class="table">
        <div class="left">
          <div class="avg"><span>Average stage times:</span><span>(<u>full</u> run time: ~4s)</span></div>
          <div class="bar"></div>
          ${this.row("#2", "00:56")}${this.row("#1", "00:54")}
        </div>
        <div class="col">
          <div class="name">Docker Deploy</div>
          <div class="mean"><span>3s</span><i></i></div>
          <div class="cell"><div>3s</div></div>
        </div>
      </div>
      <h2 class="links">Permalinks</h2>
      <ul>${LINKS.map((l) => html`<li><a>${l}</a></li>`)}</ul>
    `;
  }
}

type App = { icon: string; run?: boolean; on?: boolean; badge?: string };
const APPS: App[] = [
  { icon: "taskview" },
  { icon: "copilot" },
  { icon: "edge" },
  { icon: "explorer", run: true },
  { icon: "chrome" },
  { icon: "brave" },
  { icon: "outlook" },
  { icon: "git", run: true },
  { icon: "telegram" },
  { icon: "sticky" },
  { icon: "chrome", on: true, badge: "F" },
  { icon: "chrome", run: true, badge: " " },
  { icon: "vscode", run: true },
  { icon: "term", run: true },
  { icon: "docker", run: true },
  { icon: "notepad", run: true },
];

@customElement("task-bar")
export class TaskBar extends LitElement {
  static styles = css`
    :host { display: flex; align-items: center; height: 60px; box-sizing: border-box; padding-bottom: 1px; background: #d9d9d9; border-top: 1px solid #a6a6a6; color: #1c1c1c; font-size: 14px; letter-spacing: 0; }
    .weather { display: flex; width: 365px; box-sizing: border-box; padding-left: 24px; line-height: 20px; align-items: center; padding-bottom: 1px; }
    .weather svg { margin-right: 8px; overflow: visible; }
    .weather small { font-size: 14.500px; color: #555; display: block; }
    .search { display: flex; align-items: center; width: 274px; height: 38px; box-sizing: border-box; margin: 1px 0 0 17px; border-radius: 19px; background: #f3f3f3; border: 1px solid #c8c8c8; border-bottom-color: #aaa; padding: 0 5px 0 14px; font-size: 16px; color: #555; }
    .search ui-icon { color: #222; margin-right: 12px; }
    .search svg { margin-left: auto; }
    .apps { display: flex; margin-left: 3px; }
    .app { width: 55px; height: 58px; display: flex; align-items: center; justify-content: center; position: relative; }
    .app::after { content: ""; position: absolute; left: 23.500px; top: 49px; width: 8px; height: 4px; border-radius: 2px; }
    .run::after { background: #7d7d7d; }
    .on::before { content: ""; position: absolute; left: 3px; top: 5px; width: 49px; height: 48px; border-radius: 5px; background: #ececec; border: 1px solid #e2e2e2; box-sizing: border-box; }
    .on::after { left: 17px; width: 20px; background: #6a66d8; }
    .app ui-icon { position: relative; }
    .badge { position: absolute; left: 28px; top: 8px; width: 20px; height: 20px; border-radius: 50%; background: #c2185b; color: #fff; font-size: 11.500px; line-height: 20px; text-align: center; }
    .photo { background: radial-gradient(ellipse at 50% 65%, #9c4a50 0 22%, transparent 24%), linear-gradient(90deg, #7d8076, #e4ddd4 40%, #d6cdc2 70%, #6e7068); }
    .tray { display: flex; align-items: center; margin-left: auto; }
    .tray .wifi { margin-left: 21px; }
    .tray .mute { margin-left: 8px; }
    .tray .battery { margin-left: 8px; }
    .clock { text-align: right; line-height: 20px; padding: 0 24px 1px 0; margin-left: 14px; width: 75px; font-size: 14.400px; }
  `;
  render() {
    return html`
      <div class="weather">
        <svg width="32" height="32" viewBox="0 0 32 32">
          <defs><linearGradient id="cl" x1="0" y1="0" x2="0" y2="1"><stop offset="0" stop-color="#7fa8ee" /><stop offset=".6" stop-color="#c3d9fb" /><stop offset="1" stop-color="#9cb9ef" /></linearGradient></defs>
          <path d="M7 25a6 6 0 0 1-1-11.800A10 10 0 0 1 25 13a6 6 0 0 1 1 12z" fill="url(#cl)" />
          <path d="M1 19c2-4 7-5 10-2 5 3 12 3 19 0" fill="none" stroke="#a9c6f8" stroke-width="1.500" />
          <circle cx="25" cy="5" r="10" fill="#c42b1c" />
          <text x="24.800" y="10" text-anchor="middle" font-size="14" fill="#fff" font-family="Open Sans, sans-serif">9+</text>
        </svg>
        <div>24°C<small>Cloudy</small></div>
      </div>
      <ui-icon name="start" size="29"></ui-icon>
      <div class="search">
        <ui-icon name="search" size="19"></ui-icon>Search
        <svg width="60" height="34" viewBox="0 0 60 34">
          <defs>
            <radialGradient id="sk" cx=".5" cy=".65" r=".6"><stop offset="0" stop-color="#fff0b8" /><stop offset=".4" stop-color="#d8b0dc" /><stop offset=".7" stop-color="#6a50c8" /><stop offset="1" stop-color="#2b2a86" /></radialGradient>
            <linearGradient id="tv" x1="0" y1="0" x2="1" y2="1"><stop offset="0" stop-color="#2e4a80" /><stop offset=".6" stop-color="#78b4d8" /><stop offset="1" stop-color="#4a7cb8" /></linearGradient>
          </defs>
          <path d="M4 12C4 4 12 2 18 4c3-3 8-2 12-2 4-2 8-2 12 1 7-1 12 3 12 8 5 4 5 9 3 13 1 6-4 9-9 9H10c-6 0-10-5-8-10-2-4-1-8 2-11z" fill="url(#sk)" />
          <path d="M9 32c8-3 34-3 42 0l-2 2H11z" fill="#e8531f" />
          <rect x="15.500" y="14" width="30" height="15.500" rx=".5" fill="url(#tv)" stroke="#1c2340" stroke-width="1" />
          <path d="M21 30l-1.500 2.500M40 30l1.500 2.500" stroke="#1c2340" stroke-width="1.300" />
          <path d="M10 18v7M51 18v7" stroke="#d9c8f4" stroke-width="2" />
          <path d="M17 8v1M26 9v1M33 6v1M41 9v1M47 8v1M22 6v1" stroke="#fff6d0" stroke-width="1" />
        </svg>
      </div>
      <div class="apps">
        ${APPS.map(
          (a) => html`<div class=${classMap({ app: true, run: !!a.run, on: !!a.on })}>
            <ui-icon name=${a.icon} size="30"></ui-icon>
            ${a.badge ? html`<span class=${classMap({ badge: true, photo: a.badge === " " })}>${a.badge}</span>` : nothing}
          </div>`
        )}
      </div>
      <div class="tray">
        <ui-icon name="chevUp" size="18"></ui-icon>
        <ui-icon class="wifi" name="wifi" size="21"></ui-icon>
        <ui-icon class="mute" name="mute" size="21"></ui-icon>
        <ui-icon class="battery" name="battery" size="23"></ui-icon>
        <div class="clock">1:00 AM<br />9/15/2025</div>
      </div>
    `;
  }
}

@customElement("app-root")
export class AppRoot extends LitElement {
  static styles = css`
    :host { display: flex; flex-direction: column; width: 1920px; height: 1080px; overflow: hidden; background: #fefefe; font-family: "Open Sans", "Noto Sans", sans-serif; color: #14141f; }
    .page { display: flex; height: 869px; overflow: hidden; }
    .body { flex: 1; }
    .top { display: flex; align-items: center; height: 83px; padding-left: 32px; box-sizing: border-box; font-size: 16.600px; letter-spacing: 0.22px; }
    .brand { font-family: Gelasio, Georgia, "DejaVu Serif", "Liberation Serif", serif; font-weight: 700; font-size: 23px; margin-left: 16px; color: #0b0b17; width: 92px; letter-spacing: -0.3px; line-height: 30px; }
    .slash { width: 37px; display: flex; justify-content: center; }
    .acts { margin-left: auto; display: flex; gap: 34px; padding: 0 46px 0 0; }
    .acts span { position: relative; display: flex; }
    .acts i { position: absolute; right: -4px; top: -5px; width: 6px; height: 6px; border-radius: 50%; background: #ff1a1a; }
    .cols { display: flex; }
    .scroll { width: 17px; display: flex; flex-direction: column; align-items: center; background: #fcfcfc; padding: 6px 0 5px; box-sizing: border-box; }
    .thumb { width: 11px; height: 735px; border-radius: 6px; background: #8b8b8b; margin: 6px 0 auto; }
  `;
  render() {
    return html`
      <browser-chrome></browser-chrome>
      <div class="page">
        <div class="body">
          <header class="top">
            <svg width="34" height="46" viewBox="0 0 34 46">
              <ellipse cx="17" cy="22" rx="16" ry="15" fill="#d33833" stroke="#4a1a18" stroke-width=".6" />
              <path d="M7 25c3-2.500 17-3 20 0l3 8-3 4H9c-3-3-4.500-8-2-12z" fill="#2f5063" stroke="#1a2a34" stroke-width=".8" />
              <path d="M8 10C8 4 12 1 18 1c6 0 10 4 10 11 0 6-1.500 11-5 13-3 1.200-7 .5-10-2.500C9.500 19 8 15 8 10z" fill="#eed7ae" stroke="#322b28" stroke-width=".9" />
              <path d="M12 3C7 5 6 10 7.500 16l3.200 1.500c-1-4-.7-6 .3-8z" fill="#8c8682" stroke="#322b28" stroke-width=".7" />
              <path d="M16 8l3-1M23 7l2.500.5M17.500 12.500h2M23.500 12.500h1.800M18 18.500c2 1 4.500 1 6 0M22 12v4l-1.500.5" stroke="#322b28" stroke-width=".8" fill="none" />
              <path d="M15 23l6 2.500 6-2v5l-6-1.500-6 2z" fill="#d33833" stroke="#5a1512" stroke-width=".5" />
              <circle cx="22" cy="30" r="3" fill="#c9d2d8" stroke="#322b28" stroke-width=".7" />
              <path d="M12.500 33.500h11v10c-2 2-8.500 2-10 0z" fill="#fff" stroke="#322b28" stroke-width=".9" />
              <path d="M26 33c3-2 6 0 6 3s-3 4-6 2z" fill="#f5f5f5" stroke="#322b28" stroke-width=".8" />
            </svg>
            <span class="brand">Jenkins</span>
            <span class="slash"><svg width="10" height="18" viewBox="0 0 10 18"><path d="M8.500 1 1.500 17" stroke="#d3dceb" stroke-width="1.500" /></svg></span>
            <span>CD-Pipeline</span>
            <div class="acts">
              <span><ui-icon name="search" size="23"></ui-icon></span>
              <span><ui-icon name="gear" size="24"></ui-icon><i></i></span>
              <span><ui-icon name="user" size="24"></ui-icon></span>
            </div>
          </header>
          <div class="cols"><side-panel></side-panel><job-page></job-page></div>
        </div>
        <div class="scroll">
          <svg width="13" height="11" viewBox="0 0 13 11"><path d="M6.500 1.500 12 9.500H1z" fill="#8b8b8b" stroke="#8b8b8b" stroke-linejoin="round" /></svg>
          <div class="thumb"></div>
          <svg width="13" height="11" viewBox="0 0 13 11"><path d="M6.500 9.500 12 1.500H1z" fill="#8b8b8b" stroke="#8b8b8b" stroke-linejoin="round" /></svg>
        </div>
      </div>
      <task-bar></task-bar>
    `;
  }
}
